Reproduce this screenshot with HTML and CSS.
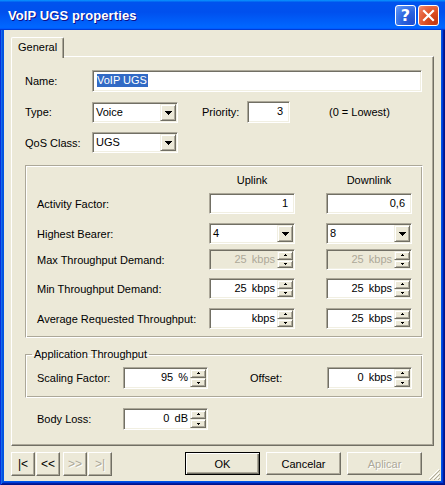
FILE: index.html
```html
<!DOCTYPE html>
<html>
<head>
<meta charset="utf-8">
<link rel="stylesheet" href="styles.css">
</head>
<body>
<div class="window">
  <div class="titlebar">
    <span class="title">VoIP UGS properties</span>
    <div class="tb-buttons">
      <div class="tb-btn help">?</div>
      <div class="tb-btn close"><svg width="19" height="19" viewBox="0 0 19 19"><path d="M5 5L14 14M14 5L5 14" stroke="#fff" stroke-width="2.2" stroke-linecap="square"/></svg></div>
    </div>
  </div>
  <div class="frame">
    <div class="client">
      <div class="tabs"><div class="tab">General</div></div>
      <div class="panel">
        <div class="row r-name">
          <span class="lbl w67">Name:</span>
          <div class="edit name"><span class="sel">VoIP UGS</span></div>
        </div>
        <div class="row r-type">
          <span class="lbl w67">Type:</span>
          <div class="combo"><span class="val">Voice</span><div class="drop"><svg width="7" height="4" viewBox="0 0 7 4"><path d="M0 0h7v1H0zM1 1h5v1H1zM2 2h3v1H2zM3 3h1v1H3z"/></svg></div></div>
          <span class="lbl prio-lbl">Priority:</span>
          <div class="edit prio">3</div>
          <span class="note">(0 = Lowest)</span>
        </div>
        <div class="row r-qos">
          <span class="lbl w67">QoS Class:</span>
          <div class="combo"><span class="val">UGS</span><div class="drop"><svg width="7" height="4" viewBox="0 0 7 4"><path d="M0 0h7v1H0zM1 1h5v1H1zM2 2h3v1H2zM3 3h1v1H3z"/></svg></div></div>
        </div>

        <div class="group">
          <div class="grow head">
            <span class="glbl"></span>
            <span class="col">Uplink</span>
            <span class="col">Downlink</span>
          </div>
          <div class="grow g1">
            <span class="glbl">Activity Factor:</span>
            <div class="edit num">1</div>
            <div class="edit num">0,6</div>
          </div>
          <div class="grow g2">
            <span class="glbl">Highest Bearer:</span>
            <div class="combo"><span class="val">4</span><div class="drop"><svg width="7" height="4" viewBox="0 0 7 4"><path d="M0 0h7v1H0zM1 1h5v1H1zM2 2h3v1H2zM3 3h1v1H3z"/></svg></div></div>
            <div class="combo"><span class="val">8</span><div class="drop"><svg width="7" height="4" viewBox="0 0 7 4"><path d="M0 0h7v1H0zM1 1h5v1H1zM2 2h3v1H2zM3 3h1v1H3z"/></svg></div></div>
          </div>
          <div class="grow g3">
            <span class="glbl">Max Throughput Demand:</span>
            <div class="spin disabled"><span class="val">25 kbps</span><div class="updown"><div class="ub"><svg width="5" height="3" viewBox="0 0 5 3"><path d="M2 0h1v1H2zM1 1h3v1H1z"/></svg></div><div class="ub"><svg width="5" height="3" viewBox="0 0 5 3"><path d="M1 1h3v1H1zM2 2h1v1H2z"/></svg></div></div></div>
            <div class="spin disabled"><span class="val">25 kbps</span><div class="updown"><div class="ub"><svg width="5" height="3" viewBox="0 0 5 3"><path d="M2 0h1v1H2zM1 1h3v1H1z"/></svg></div><div class="ub"><svg width="5" height="3" viewBox="0 0 5 3"><path d="M1 1h3v1H1zM2 2h1v1H2z"/></svg></div></div></div>
          </div>
          <div class="grow g4">
            <span class="glbl">Min Throughput Demand:</span>
            <div class="spin"><span class="val">25 kbps</span><div class="updown"><div class="ub"><svg width="5" height="3" viewBox="0 0 5 3"><path d="M2 0h1v1H2zM1 1h3v1H1z"/></svg></div><div class="ub"><svg width="5" height="3" viewBox="0 0 5 3"><path d="M1 1h3v1H1zM2 2h1v1H2z"/></svg></div></div></div>
            <div class="spin"><span class="val">25 kbps</span><div class="updown"><div class="ub"><svg width="5" height="3" viewBox="0 0 5 3"><path d="M2 0h1v1H2zM1 1h3v1H1z"/></svg></div><div class="ub"><svg width="5" height="3" viewBox="0 0 5 3"><path d="M1 1h3v1H1zM2 2h1v1H2z"/></svg></div></div></div>
          </div>
          <div class="grow g5">
            <span class="glbl">Average Requested Throughput:</span>
            <div class="spin"><span class="val">kbps</span><div class="updown"><div class="ub"><svg width="5" height="3" viewBox="0 0 5 3"><path d="M2 0h1v1H2zM1 1h3v1H1z"/></svg></div><div class="ub"><svg width="5" height="3" viewBox="0 0 5 3"><path d="M1 1h3v1H1zM2 2h1v1H2z"/></svg></div></div></div>
            <div class="spin"><span class="val">25 kbps</span><div class="updown"><div class="ub"><svg width="5" height="3" viewBox="0 0 5 3"><path d="M2 0h1v1H2zM1 1h3v1H1z"/></svg></div><div class="ub"><svg width="5" height="3" viewBox="0 0 5 3"><path d="M1 1h3v1H1zM2 2h1v1H2z"/></svg></div></div></div>
          </div>
        </div>

        <fieldset class="group2">
          <legend>Application Throughput</legend>
          <div class="row r-scale">
            <span class="lbl w86">Scaling Factor:</span>
            <div class="spin s85"><span class="val">95 %</span><div class="updown"><div class="ub"><svg width="5" height="3" viewBox="0 0 5 3"><path d="M2 0h1v1H2zM1 1h3v1H1z"/></svg></div><div class="ub"><svg width="5" height="3" viewBox="0 0 5 3"><path d="M1 1h3v1H1zM2 2h1v1H2z"/></svg></div></div></div>
            <span class="lbl off-lbl">Offset:</span>
            <div class="spin s85"><span class="val">0 kbps</span><div class="updown"><div class="ub"><svg width="5" height="3" viewBox="0 0 5 3"><path d="M2 0h1v1H2zM1 1h3v1H1z"/></svg></div><div class="ub"><svg width="5" height="3" viewBox="0 0 5 3"><path d="M1 1h3v1H1zM2 2h1v1H2z"/></svg></div></div></div>
          </div>
        </fieldset>

        <div class="row r-body">
          <span class="lbl w86">Body Loss:</span>
          <div class="spin s85"><span class="val">0 dB</span><div class="updown"><div class="ub"><svg width="5" height="3" viewBox="0 0 5 3"><path d="M2 0h1v1H2zM1 1h3v1H1z"/></svg></div><div class="ub"><svg width="5" height="3" viewBox="0 0 5 3"><path d="M1 1h3v1H1zM2 2h1v1H2z"/></svg></div></div></div>
        </div>
      </div>

      <div class="footer">
        <div class="nav">
          <div class="btn nb">|&lt;</div>
          <div class="btn nb">&lt;&lt;</div>
          <div class="btn nb dis gap">&gt;&gt;</div>
          <div class="btn nb dis">&gt;|</div>
        </div>
        <div class="actions">
          <div class="btn big default">OK</div>
          <div class="btn big">Cancelar</div>
          <div class="btn big dis">Aplicar</div>
        </div>
      </div>
      <svg class="grip" width="12" height="12" viewBox="0 0 12 12">
        <path d="M11 1L1 11M11 5L5 11M11 9L9 11" stroke="#fff" stroke-width="1"/>
        <path d="M12 2L2 12M12 6L6 12M12 10L10 12" stroke="#ACA899" stroke-width="1"/>
      </svg>
    </div>
  </div>
</div>
</body>
</html>
```

FILE: styles.css
```css
* { box-sizing: border-box; }
html, body { margin: 0; padding: 0; }
body {
  width: 445px;
  height: 485px;
  overflow: hidden;
  font-family: "Liberation Sans", Arial, sans-serif;
  font-size: 11px;
  color: #000;
  background: #fff;
}
.window {
  width: 445px;
  height: 485px;
  display: flex;
  flex-direction: column;
}
.titlebar {
  height: 30px;
  flex: none;
  display: flex;
  align-items: center;
  justify-content: space-between;
  padding: 0 6px 0 8px;
  background: linear-gradient(180deg, #0997ff, #0053ee 8%, #0050ee 40%, #0066ff 88%, #0066ff 93%, #005bff 95%, #003dd7 96%, #003dd7);
}
.title {
  color: #fff;
  font-weight: bold;
  font-size: 13px;
  letter-spacing: 0.1px;
  text-shadow: 1px 1px #0f1089;
  padding-top: 1px;
}
.tb-buttons { display: flex; gap: 2px; }
.tb-btn {
  width: 21px;
  height: 21px;
  border: 1px solid #fff;
  border-radius: 3px;
  display: flex;
  align-items: center;
  justify-content: center;
  color: #fff;
}
.help {
  background: radial-gradient(circle at 85% 85%, #1f4ed0 0%, #2a63de 45%, #4d86f0 80%, #7aa4f7 100%);
  font: bold 16px "DejaVu Sans", sans-serif;
  line-height: 19px;
}
.close {
  background: radial-gradient(circle at 85% 85%, #c33711 0%, #dd4f22 45%, #ec7150 80%, #f19a7d 100%);
}
.frame {
  flex: 1;
  display: flex;
  padding: 0 4px 4px 4px;
  background: #0055e5;
  box-shadow: inset 1px 0 #0831d9, inset -1px -1px #00138c, inset 2px 0 #166aee, inset -2px -2px #001ea0, inset 3px 0 #0855dd, inset -3px -3px #003bda;
}
.client {
  flex: 1;
  position: relative;
  background: #ece9d8;
  padding: 7px 7px 0 7px;
  display: flex;
  flex-direction: column;
}
.tabs { display: flex; height: 19px; flex: none; }
.tab {
  position: relative;
  z-index: 1;
  width: 53px;
  height: 21px;
  background: #ece9d8;
  border-top: 1px solid #fff;
  border-left: 1px solid #fff;
  border-right: 1px solid #716f64;
  box-shadow: inset -1px 0 #aca899;
  border-top-left-radius: 2px;
  border-top-right-radius: 2px;
  padding: 1px 0 0 6px;
  line-height: 16px;
}
.panel {
  height: 390px;
  flex: none;
  border: 1px solid;
  border-color: #fff #716f64 #716f64 #fff;
  box-shadow: inset -1px -1px #aca899;
  padding: 13px 9px 0 13px;
}
.row { display: flex; align-items: center; }
.lbl { flex: none; }
.w67 { width: 67px; }
.w86 { width: 86px; }

.edit, .combo, .spin {
  flex: none;
  background: #fff;
  border: 1px solid;
  border-color: #aca899 #fff #fff #aca899;
  box-shadow: inset 1px 1px #716f64, inset -1px -1px #f1efe2;
  padding: 1px;
}
.r-name { height: 22px; }
.name { width: 330px; height: 22px; padding: 3px 0 0 4px; line-height: 13px; }
.sel { background: #316ac5; color: #fff; display: inline-block; padding: 0 1px 0 0; }

.r-type { margin-top: 9px; height: 22px; }
.combo { width: 86px; height: 21px; display: flex; }
.combo .val { flex: 1; padding-left: 2px; line-height: 17px; }
.drop, .ub {
  background: #ece9d8;
  border: 1px solid;
  border-color: #f1efe2 #716f64 #716f64 #f1efe2;
  box-shadow: inset 1px 1px #fff, inset -1px -1px #aca899;
  display: flex;
  align-items: center;
  justify-content: center;
}
.drop { width: 16px; height: 17px; }
.r-type .combo { align-self: flex-end; }
.prio-lbl { margin-left: 24px; width: 45px; }
.prio { width: 43px; height: 22px; text-align: right; padding: 3px 6px 0 0; line-height: 13px; }
.note { margin-left: 39px; }
.r-qos { margin-top: 9px; height: 21px; }

.group {
  width: 398px;
  height: 173px;
  margin-top: 12px;
  border: 1px solid;
  border-color: #aca899 #fff #fff #aca899;
  box-shadow: inset 1px 1px #fff, inset -1px -1px #aca899;
  padding: 7px 0 0 11px;
}
.grow { display: flex; align-items: center; height: 21px; }
.glbl { width: 172px; flex: none; }
.grow > .edit, .grow > .combo, .grow > .spin { width: 86px; }
.grow > :nth-child(3) { margin-left: 31px; }
.head { height: 14px; line-height: 14px; }
.head .col { width: 86px; text-align: center; }
.head .col:nth-child(3) { margin-left: 31px; }
.g1 { margin-top: 6px; }
.g2 { margin-top: 9px; }
.g3 { margin-top: 5px; }
.g4 { margin-top: 8px; }
.g5 { margin-top: 9px; }
.num { height: 21px; text-align: right; padding: 3px 6px 0 0; line-height: 13px; }

.spin { height: 21px; display: flex; }
.spin .val { flex: 1; text-align: right; padding-right: 2px; line-height: 17px; white-space: nowrap; word-spacing: 2px; }
.spin.disabled { background: #ece9d8; }
.spin.disabled .val { color: #aca899; }
.s85 { width: 85px; }
.updown { width: 16px; flex: none; display: flex; flex-direction: column; }
.ub { flex: 1; }

.group2 {
  width: 398px;
  height: 50px;
  margin: 10px 0 0 0;
  padding: 0;
  border: 1px solid;
  border-color: #aca899 #fff #fff #aca899;
  box-shadow: inset 1px 1px #fff, inset -1px -1px #aca899;
  min-inline-size: 0;
}
.group2 legend {
  margin-left: 6px;
  padding: 0 2px;
  line-height: 13px;
  font-size: 11px;
}
.r-scale { margin-top: 6px; height: 22px; padding-left: 11px; }
.r-scale .spin, .r-body .spin { height: 22px; }
.off-lbl { margin-left: 42px; width: 77px; }
.r-body { margin-top: 10px; height: 22px; padding-left: 12px; }

.footer {
  margin-top: 6px;
  display: flex;
  justify-content: space-between;
  padding-right: 12px;
}
.nav { display: flex; gap: 1px; }
.nav .gap { margin-left: 2px; }
.actions { display: flex; gap: 6px; }
.btn {
  height: 24px;
  background: #ece9d8;
  border: 1px solid;
  border-color: #fff #716f64 #716f64 #fff;
  box-shadow: inset -1px -1px #aca899;
  display: flex;
  align-items: center;
  justify-content: center;
}
.nb { width: 24px; font-size: 12px; }
.big { width: 75px; height: 23px; }
.default {
  border: 1px solid #000;
  box-shadow: inset 1px 1px #fff, inset -1px -1px #716f64, inset -2px -2px #aca899;
}
.dis { color: #aca899; text-shadow: 1px 1px #fff; }
.grip { position: absolute; right: 1px; bottom: 1px; }
```
